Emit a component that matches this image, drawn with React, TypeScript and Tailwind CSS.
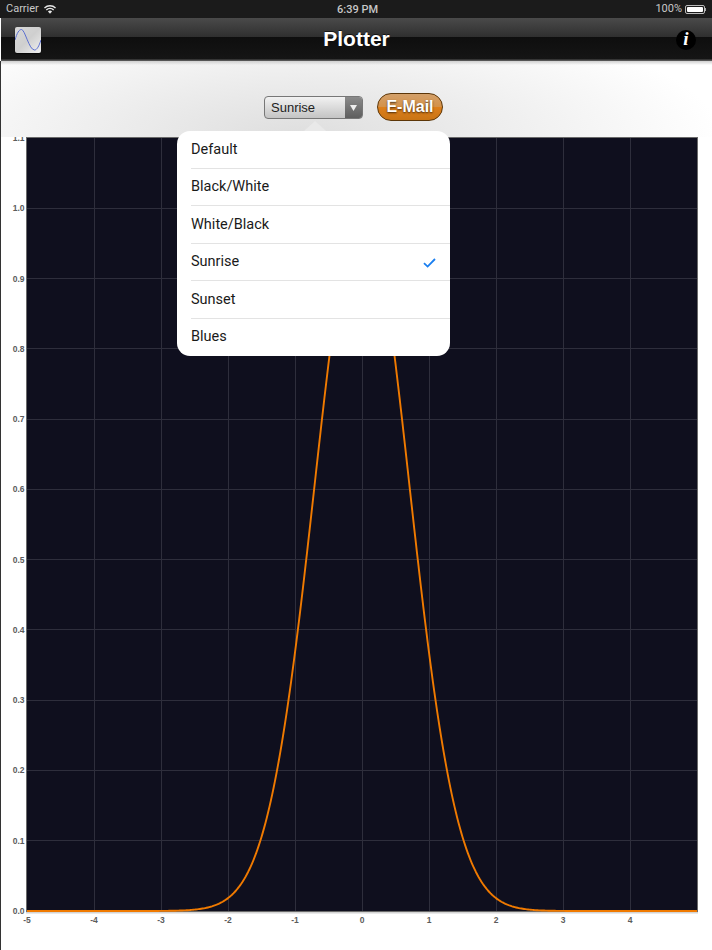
import React from "react";

const L = 27, R = 697, T = 138, B = 911;
const sx = (x: number) => L + ((x + 5) / 10) * (R - L);
const sy = (y: number) => B - (y / 1.1) * (B - T);

function curve() {
  const pts: string[] = [];
  for (let x = -5; x <= 5.0001; x += 0.02) {
    pts.push(`${sx(x).toFixed(2)},${sy(Math.exp(-x * x)).toFixed(2)}`);
  }
  return pts.join(" ");
}

function Chart() {
  const xs = [-4, -3, -2, -1, 0, 1, 2, 3, 4];
  const ys = [1, 2, 3, 4, 5, 6, 7, 8, 9, 10];
  const yl = [0, 1, 2, 3, 4, 5, 6, 7, 8, 9, 10, 11];
  return (
    <svg width="711" height="813" viewBox="1 137 711 813" className="block overflow-visible">
      <rect x={L - 1} y={T - 1} width={R - L + 2} height={B - T + 2} fill="#6a6a6a" />
      <rect x={L - 1} y={B + 1} width={R - L + 2} height={1.5} fill="#d4d4d4" />
      <rect x={L} y={T} width={R - L} height={B - T} fill="#0f0f1e" />
      {xs.map((x) => (
        <line key={x} x1={Math.round(sx(x)) + 0.5} x2={Math.round(sx(x)) + 0.5} y1={T} y2={B} stroke="#2e2e3c" strokeWidth="1" />
      ))}
      {ys.map((y) => (
        <line key={y} x1={L} x2={R} y1={Math.floor(sy(y / 10)) + 0.5} y2={Math.floor(sy(y / 10)) + 0.5} stroke="#2e2e3c" strokeWidth="1" />
      ))}
      <polyline points={curve()} fill="none" stroke="#f07a00" strokeWidth="1.9" strokeLinejoin="round" />
      {yl.map((y) => (
        <text key={y} x={24.5} y={sy(y / 10) + 3} textAnchor="end" fontSize="8.5" fontWeight="700" fill="#5c5c5c" fontFamily="Liberation Sans, sans-serif">
          {(y / 10).toFixed(1)}
        </text>
      ))}
      {[-5, ...xs].map((x) => (
        <text key={x} x={sx(x)} y={923} textAnchor="middle" fontSize="8.5" fontWeight="700" fill="#5c5c5c" fontFamily="Liberation Sans, sans-serif">
          {x}
        </text>
      ))}
    </svg>
  );
}

function Wifi() {
  return (
    <svg width="12" height="9" viewBox="0 0 13 10" className="ml-[5px]">
      <path d="M0.3 3.4 A9 9 0 0 1 12.7 3.4" fill="none" stroke="#e8e8e8" strokeWidth="1.6" />
      <path d="M2.4 5.5 A6 6 0 0 1 10.6 5.5" fill="none" stroke="#e8e8e8" strokeWidth="1.6" />
      <path d="M6.5 9.6 L4.2 7.2 A3.3 3.3 0 0 1 8.8 7.2 Z" fill="#e8e8e8" />
    </svg>
  );
}

function SineIcon() {
  return (
    <div className="w-[26px] h-[26px] rounded-[2px] shadow-[0_1px_1px_rgba(0,0,0,0.7)] bg-gradient-to-br from-[#d8d8d8] via-[#cfcfcf] to-[#f0f0f0] overflow-hidden">
      <svg width="26" height="26" viewBox="0 0 26 26">
        <path d="M0 13 C2 6 4 2.5 6.5 2.5 C10 2.5 14 23 19.5 23 C22 23 24 19 26 13" fill="none" stroke="#5b6fd0" strokeWidth="1" />
      </svg>
    </div>
  );
}

const items = ["Default", "Black/White", "White/Black", "Sunrise", "Sunset", "Blues"];

export default function App() {
  return (
    <div className="relative w-[712px] h-[950px] overflow-hidden bg-white font-['Liberation_Sans',sans-serif]">
      <div className="h-[18px] bg-[#1b1b1b] flex items-center justify-between pl-[6px] pr-[6px] text-[11px] text-[#c8c8c8] font-['Roboto',sans-serif] relative">
        <div className="flex items-center">
          <span>Carrier</span>
          <Wifi />
        </div>
        <span className="absolute left-[337px] top-[2px] font-medium">6:39 PM</span>
        <div className="flex items-center gap-[3px]">
          <span>100%</span>
          <div className="flex items-center">
            <div className="w-[20px] h-[9px] border border-[#bbb] rounded-[2px] p-[1px]">
              <div className="w-full h-full bg-white rounded-[1px]" />
            </div>
            <div className="w-[1px] h-[3px] bg-[#aaa]" />
          </div>
        </div>
      </div>

      <div className="h-[43px] relative flex items-center justify-between pl-[14px] pr-[16px] bg-[linear-gradient(to_bottom,#4a4a4a_0px,#2f2f2f_19px,#0e0e0e_19px,#151515_41px,#555555_42px)] ml-[1px]">
        <SineIcon />
        <h1 className="absolute left-0 right-0 text-center text-[21px] font-bold text-white leading-none top-[10px] [text-shadow:0_-1px_0_rgba(0,0,0,0.6)]">Plotter</h1>
        <div className="w-[20px] h-[20px] rounded-full bg-black flex items-center justify-center text-white italic font-bold text-[19px] font-['Liberation_Serif',serif]">i</div>
      </div>

      <div className="flex flex-col border-l border-[#333]">
        <div className="h-[76px] flex items-start justify-center pt-[32px] pr-[6px] gap-[14px] bg-[radial-gradient(ellipse_420px_130px_at_42%_100%,#dedede,#ffffff)] relative">
          <div className="absolute left-0 right-0 top-0 h-[4px] bg-gradient-to-b from-[#cfcfcf] to-transparent" />
          <div className="mt-[3px] w-[99px] h-[23px] rounded-[4px] border border-[#777] flex overflow-hidden bg-gradient-to-b from-[#f2f2f2] to-[#c4c4c4]">
            <span className="flex-1 pl-[6px] text-[13px] leading-[22px] text-[#222]">Sunrise</span>
            <span className="w-[17px] bg-gradient-to-b from-[#8a8a8a] to-[#5e5e5e] flex items-center justify-center">
              <svg width="7" height="6" viewBox="0 0 7 6"><path d="M0 0H7L3.5 6Z" fill="#eee" /></svg>
            </span>
          </div>
          <button className="w-[66px] h-[28px] rounded-[14px] border border-[#5c3608] bg-[linear-gradient(to_bottom,#d3a06a_0%,#d4924a_48%,#dc7f1c_52%,#c97414_100%)] text-white font-bold text-[16px] [text-shadow:0_1px_2px_rgba(0,0,0,0.7)]">E-Mail</button>
        </div>
        <Chart />
      </div>

      <div className="absolute left-[304px] top-[121px] w-0 h-0 border-x-[11px] border-x-transparent border-b-[10px] border-b-[#e9e9e9]" />
      <div className="absolute left-[177px] top-[131px] w-[273px] h-[225px] rounded-[13px] bg-white overflow-hidden font-['Roboto',sans-serif] text-[14.5px] text-[#1a1a1a]">
        {items.map((it, i) => (
          <div key={it} className="h-[37.5px] pl-[14px] relative flex items-center">
            <span>{it}</span>
            {it === "Sunrise" && (
              <svg className="absolute left-[246px] top-[14px]" width="13" height="10" viewBox="0 0 13 10">
                <path d="M1 5.2 L4.6 8.6 L12 1" fill="none" stroke="#1a7ff0" strokeWidth="1.8" />
              </svg>
            )}
            {i < 5 && <div className="absolute left-[14px] right-0 bottom-0 h-[1px] bg-[#e3e3e3]" />}
          </div>
        ))}
      </div>
    </div>
  );
}
